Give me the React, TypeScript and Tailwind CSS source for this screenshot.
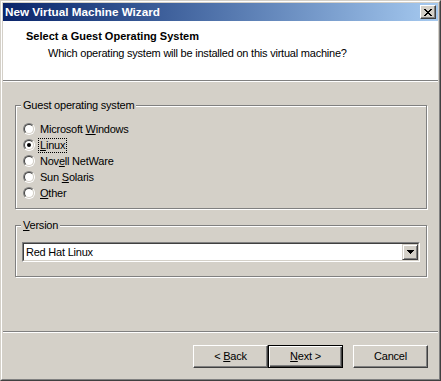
import React from 'react';

const font = { fontFamily: '"Liberation Sans", Arial, sans-serif' };

const Radio: React.FC<{ checked?: boolean }> = ({ checked }) => (
  <span className="w-[12px] h-[12px] rounded-full border border-t-[#808080] border-l-[#808080] border-r-white border-b-white shrink-0 flex">
    <span className="flex-1 rounded-full border border-t-[#404040] border-l-[#404040] border-r-[#d4d0c8] border-b-[#d4d0c8] bg-white flex items-center justify-center">
      {checked && <span className="w-[4px] h-[4px] rounded-full bg-black" />}
    </span>
  </span>
);

const GroupBox: React.FC<{ legend: React.ReactNode; className?: string; children: React.ReactNode }> = ({ legend, className, children }) => (
  <div className={`relative border border-[#808080] shadow-[inset_1px_1px_0_#fff,1px_1px_0_#fff] ${className ?? ''}`}>
    <span className="absolute -top-[7px] left-[5px] bg-[#d4d0c8] px-[2px] leading-[13px]">{legend}</span>
    {children}
  </div>
);

const WinButton: React.FC<{ isDefault?: boolean; children: React.ReactNode }> = ({ isDefault, children }) => (
  <button
    className={
      isDefault
        ? 'w-[75px] h-[23px] bg-[#d4d0c8] border border-black shadow-[inset_1px_1px_0_#fff,inset_-1px_-1px_0_#404040,inset_-2px_-2px_0_#808080] text-[11px] leading-none text-black'
        : 'w-[75px] h-[23px] bg-[#d4d0c8] border border-t-white border-l-white border-r-[#404040] border-b-[#404040] shadow-[inset_-1px_-1px_0_#808080] text-[11px] leading-none text-black'
    }
  >
    {children}
  </button>
);

const options = [
  { pre: 'Microsoft ', key: 'W', post: 'indows' },
  { pre: '', key: 'L', post: 'inux', checked: true },
  { pre: 'Nov', key: 'e', post: 'll NetWare' },
  { pre: 'Sun ', key: 'S', post: 'olaris' },
  { pre: '', key: 'O', post: 'ther' },
];

export default function App() {
  return (
    <div style={font} className="w-[441px] h-[381px] text-[11px] tracking-[-0.22px] text-black border border-t-[#d4d0c8] border-l-[#d4d0c8] border-r-[#404040] border-b-[#404040]">
      <div className="h-full flex flex-col bg-[#d4d0c8] p-px border border-t-white border-l-white border-r-[#808080] border-b-[#808080]">
        {/* Title bar */}
        <div className="h-[18px] flex items-center justify-between pl-[2px] pr-[2px] bg-gradient-to-r from-[#0a246a] to-[#a6caf0]">
          <span className="text-white font-bold text-[11.7px] tracking-normal leading-none">New Virtual Machine Wizard</span>
          <div className="w-[16px] h-[14px] bg-[#d4d0c8] border border-t-white border-l-white border-r-[#404040] border-b-[#404040] shadow-[inset_-1px_-1px_0_#808080] flex items-center justify-center">
            <svg width="8" height="7" viewBox="0 0 8 7" shapeRendering="crispEdges">
              <path d="M0 0h2v1h-2zM6 0h2v1h-2zM1 1h2v1h-2zM5 1h2v1h-2zM2 2h4v1h-4zM3 3h2v1h-2zM2 4h4v1h-4zM1 5h2v1h-2zM5 5h2v1h-2zM0 6h2v1h-2zM6 6h2v1h-2z" fill="#000" />
            </svg>
          </div>
        </div>

        {/* Header */}
        <div className="h-[59px] bg-white pt-[9px]">
          <div className="pl-[23px] font-bold tracking-normal leading-[13px]">Select a Guest Operating System</div>
          <div className="pl-[45px] mt-[4px] leading-[13px]">Which operating system will be installed on this virtual machine?</div>
        </div>
        <div className="h-px bg-[#808080]" />
        <div className="h-px bg-white" />

        {/* Body */}
        <div className="flex-1 flex flex-col pt-[23px] pl-[12px] pr-[11px]">
          <GroupBox legend="Guest operating system" className="h-[104px] pt-[15px] pl-[7px]">
            <div className="flex flex-col">
              {options.map((o, i) => (
                <div key={i} className="h-[16px] flex items-center gap-[4px]">
                  <Radio checked={o.checked} />
                  <span className={`leading-[13px] px-px ${o.checked ? 'outline outline-1 outline-dotted outline-black' : ''}`}>
                    {o.pre}
                    <u>{o.key}</u>
                    {o.post}
                  </span>
                </div>
              ))}
            </div>
          </GroupBox>

          <GroupBox legend={<><u>V</u>ersion</>} className="mt-[16px] h-[52px] pt-[16px] px-[6px]">
            <div className="h-[20px] flex border border-t-[#808080] border-l-[#808080] border-r-white border-b-white">
              <div className="flex-1 flex bg-white border border-t-[#404040] border-l-[#404040] border-r-[#d4d0c8] border-b-[#d4d0c8]">
                <span className="flex-1 flex items-center pl-[2px] leading-none">Red Hat Linux</span>
                <div className="w-[16px] h-[16px] bg-[#d4d0c8] border border-t-[#d4d0c8] border-l-[#d4d0c8] border-r-[#404040] border-b-[#404040] shadow-[inset_1px_1px_0_#fff,inset_-1px_-1px_0_#808080] flex items-center justify-center">
                  <svg width="7" height="4" viewBox="0 0 7 4" shapeRendering="crispEdges">
                    <path d="M0 0h7v1h-7zM1 1h5v1h-5zM2 2h3v1h-3zM3 3h1v1h-1z" fill="#000" />
                  </svg>
                </div>
              </div>
            </div>
          </GroupBox>
          <div className="flex-1" />
        </div>

        {/* Footer */}
        <div className="h-px bg-[#808080]" />
        <div className="h-px bg-white" />
        <div className="flex justify-end pt-[12px] pb-[10px] pr-[10px]">
          <WinButton>
            &lt; <u>B</u>ack
          </WinButton>
          <WinButton isDefault>
            <u>N</u>ext &gt;
          </WinButton>
          <div className="w-[10px]" />
          <WinButton>Cancel</WinButton>
        </div>
      </div>
    </div>
  );
}
